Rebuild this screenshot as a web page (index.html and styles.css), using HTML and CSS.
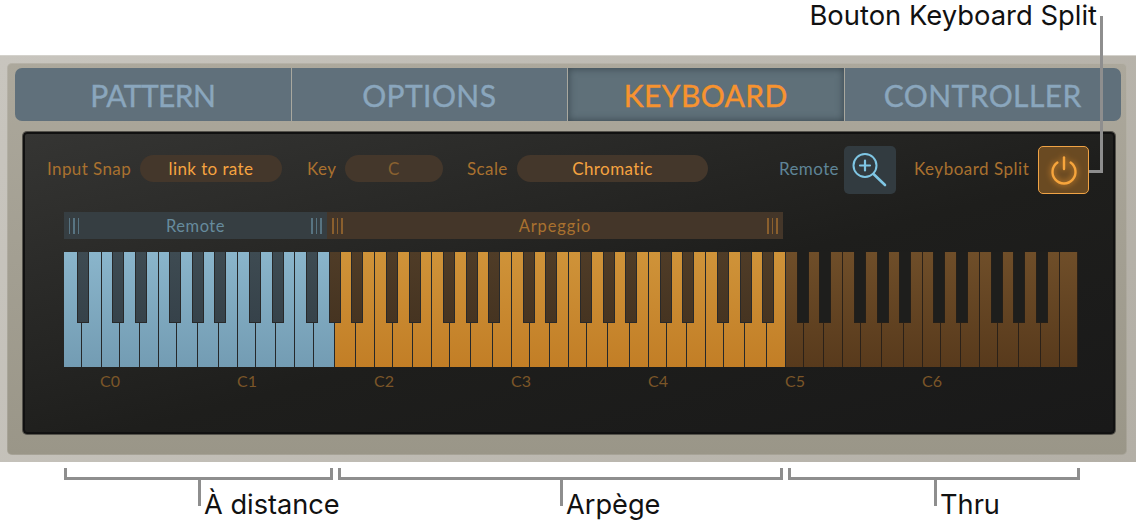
FILE: index.html
```html
<!DOCTYPE html>
<html lang="fr">
<head>
    <meta charset="UTF-8">
    <title>Keyboard</title>
    <link rel="stylesheet" href="styles.css">
</head>
<body>

<div class="callout">Bouton Keyboard Split</div>
<div class="leader"></div>

<div class="frame">
    <div class="plate">
        <div class="tabs">
            <div class="tab tab-pattern">PATTERN</div>
            <div class="tab">OPTIONS</div>
            <div class="tab active">KEYBOARD</div>
            <div class="tab">CONTROLLER</div>
        </div>

        <div class="display">
            <div class="controls">
                <span class="label snap-label">Input Snap</span>
                <span class="pill snap-pill">link to rate</span>
                <span class="label key-label">Key</span>
                <span class="pill key-pill dim">C</span>
                <span class="label scale-label">Scale</span>
                <span class="pill scale-pill">Chromatic</span>
                <span class="label remote-label">Remote</span>
                <div class="zoom-btn">
                    <svg width="44" height="44" viewBox="0 0 44 44" fill="none" stroke="#7fc6e4" stroke-linecap="round">
                        <circle cx="19" cy="17.5" r="11.5" stroke-width="2"/>
                        <path d="M19 12.5v10M14 17.5h10" stroke-width="2.2"/>
                        <path d="M27.5 26L39 37" stroke-width="2.6"/>
                    </svg>
                </div>
                <span class="label split-label">Keyboard Split</span>
                <div class="power-btn">
                    <svg width="32" height="32" viewBox="0 0 32 32" fill="none" stroke="#f7a53c" stroke-width="2.4" stroke-linecap="round">
                        <path d="M16 3.5v11.5"/>
                        <path d="M9.4 8.6a11.5 11.5 0 1 0 13.2 0"/>
                    </svg>
                </div>
            </div>

            <div class="zones">
                <div class="zone zone-remote">
                    <span class="grip"></span>
                    <span class="zone-name">Remote</span>
                    <span class="grip"></span>
                </div>
                <div class="zone zone-arp">
                    <span class="grip"></span>
                    <span class="zone-name">Arpeggio</span>
                    <span class="grip"></span>
                </div>
            </div>

            <div class="keyboard" id="keyboard"></div>

            <div class="octaves">
                <span>C0</span>
                <span>C1</span>
                <span>C2</span>
                <span>C3</span>
                <span>C4</span>
                <span>C5</span>
                <span>C6</span>
            </div>
        </div>
    </div>
</div>

<div class="brackets">
    <div class="bracket b-remote"><div class="stem"><span>À distance</span></div></div>
    <div class="bracket b-arp"><div class="stem"><span>Arpège</span></div></div>
    <div class="bracket b-thru"><div class="stem"><span>Thru</span></div></div>
</div>

<script src="keys.js"></script>
</body>
</html>
```

FILE: styles.css
```css
body {
    margin: 0;
    width: 1136px;
    height: 527px;
    overflow: hidden;
    position: relative;
    background-color: white;
    font-family: Lato, sans-serif;
}

/* Annotations */
.callout {
    height: 55px;
    box-sizing: border-box;
    padding: 0 39px 0 0;
    text-align: right;
    font-family: Inter, sans-serif;
    font-size: 27.4px;
    line-height: 31px;
    color: #111;
}

.leader {
    position: absolute;
    left: 1089px;
    top: 16px;
    width: 11px;
    height: 154px;
    border-right: 3px solid #8e8e8e;
    border-bottom: 3px solid #8e8e8e;
}

.brackets {
    display: flex;
    padding: 6px 0 0 64px;
}

.bracket {
    position: relative;
    box-sizing: border-box;
    height: 12px;
    border: 3px solid #8e8e8e;
    border-top: 0;
}

.b-remote { width: 269px; }
.b-arp { width: 445px; margin-left: 5px; }
.b-thru { width: 292px; margin-left: 5px; }

.stem {
    position: absolute;
    top: 9px;
    width: 3px;
    height: 29px;
    background-color: #8e8e8e;
}

.b-remote .stem { left: 131px; }
.b-arp .stem { left: 219px; }
.b-thru .stem { left: 143px; }

.stem span {
    position: absolute;
    left: 6px;
    top: 13px;
    font-family: Inter, sans-serif;
    font-size: 27.2px;
    line-height: 30px;
    color: #111;
    white-space: nowrap;
}

/* Plugin body */
.frame {
    height: 407px;
    box-sizing: border-box;
    padding: 7px 9px 7px 7px;
    background: linear-gradient(120deg, #c8c5be, #b3afa6);
    border-top: 1px solid #d4d2cc;
}

.plate {
    height: 392px;
    box-sizing: border-box;
    padding: 5px 6px 0 8px;
    border-radius: 5px;
    background: linear-gradient(#aca89c, #9a9688);
    box-shadow: inset 0 0 0 1px rgba(255, 255, 255, 0.12);
}

.tabs {
    display: flex;
    height: 53px;
    border-radius: 7px;
    overflow: hidden;
    background-color: #60707b;
}

.tab {
    width: 276.5px;
    box-sizing: border-box;
    border-right: 1px solid #a9a89f;
    text-align: center;
    font-size: 30px;
    line-height: 55px;
    letter-spacing: 0.4px;
    color: #8aa6bd;
    -webkit-text-stroke: 0.4px currentColor;
}

.tab:last-child {
    border-right: 0;
}

.tab-pattern {
    letter-spacing: -0.6px;
}

.active {
    color: #f7932f;
    background-color: #5f7079;
    box-shadow: inset 0 0 7px 1px #3e4c55;
}

.display {
    box-sizing: border-box;
    width: 1092px;
    height: 302px;
    margin-top: 11px;
    margin-left: 8px;
    padding: 12px 0 0 39px;
    border: 2px solid #111;
    border-radius: 4px;
    background: linear-gradient(165deg, #353533, #1e1e1c 55%, #191919);
    box-shadow: 0 0 0 1px #55534c;
}

/* Top row of controls */
.controls {
    display: flex;
    align-items: center;
    height: 48px;
    margin-left: -17px;
    font-size: 17px;
    letter-spacing: 0.4px;
}

.label {
    margin-bottom: 3px;
    color: #a9712f;
    white-space: nowrap;
}

.pill {
    height: 27px;
    margin-bottom: 3px;
    border-radius: 14px;
    background-color: #44372b;
    color: #f6a340;
    text-align: center;
    line-height: 27px;
}

.dim { color: #8a6130; }

.snap-label { width: 93px; }
.snap-pill { width: 142px; }
.key-label { width: 38px; margin-left: 25px; }
.key-pill { width: 98px; }
.scale-label { width: 50px; margin-left: 24px; }
.scale-pill { width: 191px; }
.remote-label { width: 65px; margin-left: 71px; color: #5f8497; }
.split-label { width: 124px; margin-left: 18px; letter-spacing: 0.5px; }

.zoom-btn {
    width: 52px;
    height: 48px;
    border-radius: 5px;
    background-color: #323b40;
}

.zoom-btn svg { display: block; margin: 2px 0 0 2px; }

.power-btn {
    box-sizing: border-box;
    width: 51px;
    height: 48px;
    border: 1.5px solid #f0a345;
    border-radius: 5px;
    background-color: #6a4a22;
    display: flex;
    align-items: center;
    justify-content: center;
}

.power-btn svg { filter: drop-shadow(0 0 3px #e8932e); }

/* Zone bar */
.zones {
    display: flex;
    height: 27px;
    margin-top: 18px;
    font-size: 16.5px;
    letter-spacing: 0.5px;
}

.zone {
    display: flex;
    align-items: center;
    box-sizing: border-box;
    padding: 0 5px;
}

.zone-remote { width: 263px; background-color: #363e42; color: #668b9d; }
.zone-arp { width: 456px; background-color: #443629; color: #a9712f; letter-spacing: 0.9px; }

.zone-name {
    flex: 1;
    text-align: center;
}

.grip {
    width: 11px;
    height: 16px;
    background: repeating-linear-gradient(90deg, currentColor 0 1.5px, transparent 1.5px 4.5px);
    opacity: 0.7;
}

/* Keys */
.keyboard {
    position: relative;
    display: flex;
    height: 115px;
    margin-top: 13px;
}

.white {
    height: 115px;
    box-sizing: border-box;
    border-right: 1px solid #25282a;
}

.white.remote { background: linear-gradient(#8ab5cb, #739cb3); }
.white.arp { background: linear-gradient(#cf9339, #c27e26); }
.white.thru { background: linear-gradient(#6f4e29, #583a1c); border-right-color: #2b2118; }

.black {
    position: absolute;
    top: 0;
    width: 12px;
    height: 71px;
    box-sizing: border-box;
    border: 1px solid #28292a;
    border-top: 0;
}

.black.remote { background: linear-gradient(#3e4b52, #36424a); }
.black.arp { background: linear-gradient(#4f3c27, #463421); }
.black.thru { background-color: #1e1e1c; border-color: #241f19; }

.octaves {
    display: flex;
    margin: 5px 0 0 36px;
    font-size: 16px;
    line-height: 18px;
    color: #7b5628;
}

.octaves span {
    width: 137px;
    text-align: left;
}
```

FILE: keys.js
```js
// 88 keys, A-1 to C7. Widths measured per note, one octave = 136.9px
var widths = { 0: 18, 2: 20, 4: 19, 5: 18.2, 7: 21, 9: 21.7, 11: 19 };
var blackLeft = { 1: 11, 3: 33.7, 6: 68.3, 8: 91, 10: 113.3 };
var board = document.getElementById('keyboard');
var firstC = 37; // first C from the left of the keyboard

function zoneOf(n) {
    if (n < 20) return 'remote';
    if (n < 60) return 'arp';
    return 'thru';
}

for (var n = -3; n <= 84; n++) {
    var note = ((n % 12) + 12) % 12;
    var octave = Math.floor(n / 12);
    var key = document.createElement('div');

    if (widths[note]) {
        key.className = 'white ' + zoneOf(n);
        var w = widths[note];
        if (n == -3) w = 18;
        if (n == -1) w = 19.5;
        if (n == 84) w = 18;
        key.style.width = w + 'px';
    } else {
        key.className = 'black ' + zoneOf(n);
        key.style.left = (firstC + octave * 136.9 + blackLeft[note]) + 'px';
    }
    board.appendChild(key);
}
```
